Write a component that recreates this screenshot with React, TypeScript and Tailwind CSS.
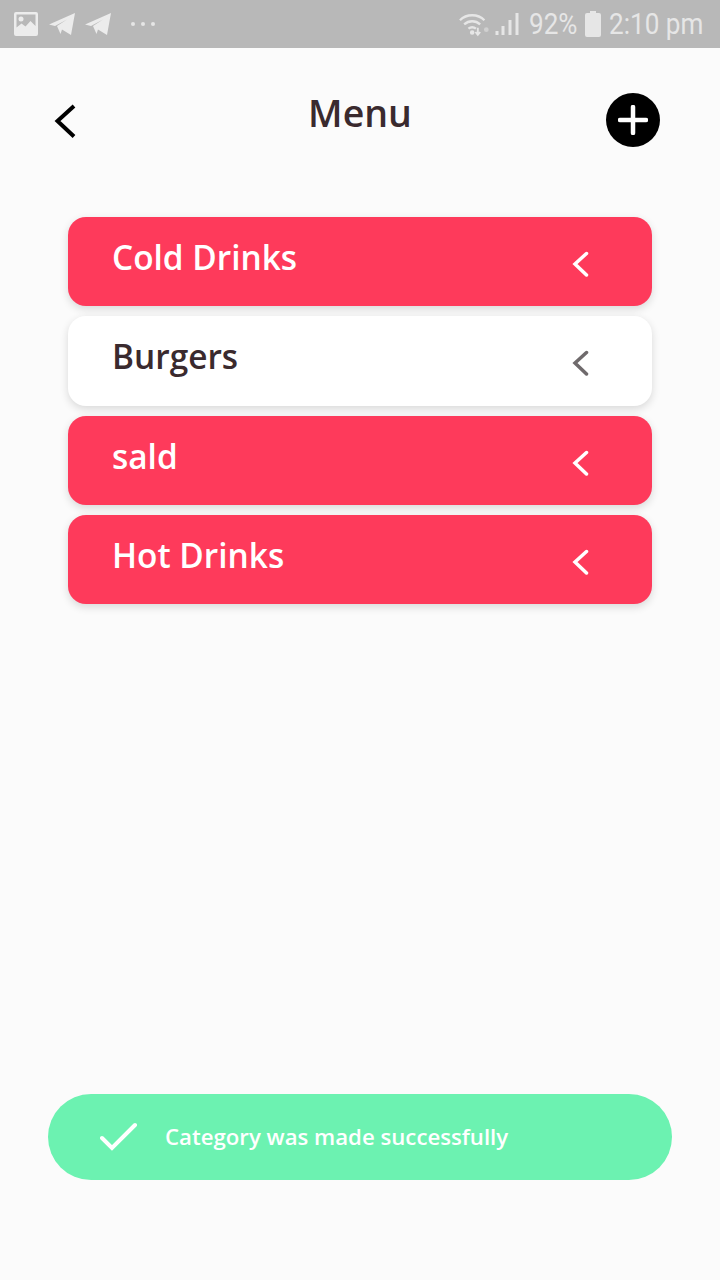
export default function App() {
  const rows = [
    { label: "Cold Drinks", active: true },
    { label: "Burgers", active: false },
    { label: "sald", active: true },
    { label: "Hot Drinks", active: true },
  ];
  return (
    <div className="relative h-[1280px] w-[720px] overflow-hidden bg-[#fbfbfb] font-['Open_Sans',sans-serif]">
      <div className="flex h-12 items-center justify-between bg-[#b8b8b8] pl-[14px] pr-[17px] text-[#e6e6e6]">
        <div className="flex items-center">
          <svg width="24" height="24" viewBox="0 0 24 24">
            <path fillRule="evenodd" fill="#ececec" d="M2 0h20a2 2 0 0 1 2 2v20a2 2 0 0 1-2 2H2a2 2 0 0 1-2-2V2a2 2 0 0 1 2-2zM2.500 2.500v13l5-4 4 3 5-5.500 5 5V2.500z" />
            <circle cx="7" cy="7" r="2.500" fill="#ececec" />
          </svg>
          <svg className="ml-[10px]" width="27" height="24" viewBox="0 0 27 24">
            <path fill="#ececec" d="M1 12.500 27 1l-4 22-9-5.500-1.500 4.500-3.500-8 10-6.500-12 6.500z" />
          </svg>
          <svg className="ml-[9px]" width="27" height="24" viewBox="0 0 27 24">
            <path fill="#ececec" d="M1 12.500 27 1l-4 22-9-5.500-1.500 4.500-3.500-8 10-6.500-12 6.500z" />
          </svg>
          <div className="ml-[20px] flex gap-[6px]">
            <span className="h-[4px] w-[4px] rounded-full bg-[#e6e6e6]" />
            <span className="h-[4px] w-[4px] rounded-full bg-[#e6e6e6]" />
            <span className="h-[4px] w-[4px] rounded-full bg-[#e6e6e6]" />
          </div>
        </div>
        <div className="flex items-center font-['Roboto',sans-serif] text-[30px] font-normal leading-none">
          <svg width="32" height="26" viewBox="0 0 34 26" fill="none" stroke="#e6e6e6" strokeWidth="2.500">
            <path d="M1 9C8 2 20 2 27 9" />
            <path d="M5.500 13.500c5-4.500 12-4.500 17 0" />
            <path d="M10 18c2.500-2 5.500-2 8 0" />
            <circle cx="14" cy="22" r="1.200" fill="#e6e6e6" />
            <path d="M20 17v7M17.500 21.500l2.500 3 2.500-3" strokeWidth="2" />
            <circle cx="29" cy="19" r="2.500" fill="#d0d0d0" stroke="none" />
          </svg>
          <svg className="ml-[4px]" width="25" height="26" viewBox="0 0 24 26" fill="#e6e6e6">
            <rect x="0" y="20" width="3" height="4" />
            <rect x="6" y="15" width="3" height="9" />
            <rect x="13" y="9" width="3" height="15" />
            <rect x="20" y="2" width="3" height="22" />
          </svg>
          <span className="ml-[9px] w-[48px] origin-left scale-x-[0.87] whitespace-nowrap">92%</span>
          <svg className="ml-[8px]" width="16" height="26" viewBox="0 0 16 26" fill="#e6e6e6">
            <path d="M5 0h6v2h3a2 2 0 0 1 2 2v20a2 2 0 0 1-2 2H2a2 2 0 0 1-2-2V4a2 2 0 0 1 2-2h3z" />
          </svg>
          <span className="ml-[8px] w-[94px] origin-left scale-x-[0.87] whitespace-nowrap">2:10 pm</span>
        </div>
      </div>

      <div className="relative h-[169px]">
        <svg className="absolute left-[52px] top-[55px]" width="26" height="38" viewBox="0 0 26 38" fill="none" stroke="#000" strokeWidth="4">
          <path d="M22 3 5.500 18 22 33.500" />
        </svg>
        <h1 className="pt-[40px] text-center text-[37.500px] font-semibold leading-[50px] text-[#3a2a2e]">Menu</h1>
        <div className="absolute left-[606px] top-[44.500px] flex h-[54px] w-[54px] items-center justify-center rounded-full bg-black">
          <svg width="30" height="30" viewBox="0 0 30 30" stroke="#fff" strokeWidth="4.500" strokeLinecap="round">
            <path d="M15 2v26M2 15h26" />
          </svg>
        </div>
      </div>

      <div className="mx-[68px] flex flex-col gap-[10px]">
        {rows.map((row) => (
          <div
            key={row.label}
            className={
              row.active
                ? "flex h-[89.330px] items-center justify-between rounded-[18px] bg-[#fe3a5b] pl-[44px] pr-[63px] text-white shadow-[0_3px_8px_rgba(0,0,0,0.14)]"
                : "flex h-[89.330px] items-center justify-between rounded-[18px] bg-white pl-[44px] pr-[63px] text-[#3a2a2e] shadow-[0_3px_8px_rgba(0,0,0,0.14)]"
            }
          >
            <span className="-mt-[9px] text-[33.400px] font-semibold leading-[46px]">{row.label}</span>
            <svg className="mt-[5px]" width="17" height="26" viewBox="0 0 17 26" fill="none" stroke={row.active ? "#fff" : "#6f6a6c"} strokeWidth="3.500" strokeLinecap="round">
              <path d="M14.500 2.500 3 13l11.500 11" />
            </svg>
          </div>
        ))}
      </div>

      <div className="absolute left-[48px] top-[1094px] flex h-[86px] w-[624px] items-center rounded-[43px] bg-[#6cf2b1] pl-[52px] text-white">
        <svg width="38" height="30" viewBox="0 0 38 30" fill="none" stroke="#fff" strokeWidth="4" strokeLinecap="round">
          <path d="M2 16l10 10L35 3" />
        </svg>
        <span className="ml-[27px] text-[22.200px] font-semibold leading-8">Category was made successfully</span>
      </div>
    </div>
  );
}
